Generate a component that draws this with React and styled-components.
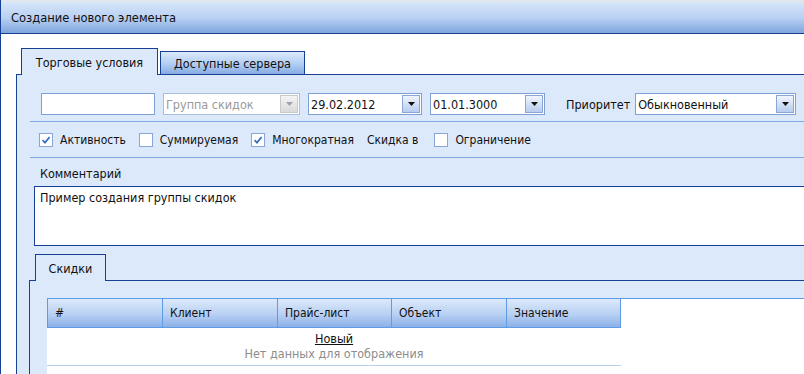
import React from 'react'
import styled, { createGlobalStyle } from 'styled-components'

const dark = '#173f94'
const fill = '#dce9fb'
const field = '#7f9fd6'

const Global = createGlobalStyle`
  html, body { margin: 0; padding: 0; background: #fff; }
  body { font-family: Tahoma, "DejaVu Sans Condensed", "Liberation Sans", sans-serif; font-size: 12px; color: #111; }
`

const Checked = () => (
  <svg width="10" height="10" viewBox="0 0 10 10">
    <path d="M1.5 5.2 L4 7.6 L8.6 2" fill="none" stroke="#3b6fc6" strokeWidth="1.8" />
  </svg>
)

const Arrow = ({ disabled }) => (
  <svg width="7" height="4" viewBox="0 0 7 4">
    <path d="M0 0 H7 L3.5 4 Z" fill={disabled ? '#9aa3ad' : '#111'} />
  </svg>
)

const ComboBox = ({ width, value, disabled }) => (
  <Combo $width={width} $disabled={disabled}>
    <ComboText $disabled={disabled}>{value}</ComboText>
    <DropButton $disabled={disabled}><Arrow disabled={disabled} /></DropButton>
  </Combo>
)

const Check = ({ checked, label }) => (
  <CheckItem>
    <Box>{checked && <Checked />}</Box>
    <span>{label}</span>
  </CheckItem>
)

const columns = ['#', 'Клиент', 'Прайс-лист', 'Объект', 'Значение']

export default function App() {
  return (
    <Window>
      <Global />
      <TopStrip />
      <TitleBar>Создание нового элемента</TitleBar>
      <Body>
        <TabStrip>
          <Tab $active $width={137}>Торговые условия</Tab>
          <Tab $width={145}>Доступные сервера</Tab>
        </TabStrip>
        <Panel>
          <FieldRow>
            <TextInput $width={114} />
            <ComboBox width={137} value="Группа скидок" disabled />
            <ComboBox width={114} value="29.02.2012" />
            <ComboBox width={115} value="01.01.3000" />
            <Label>Приоритет</Label>
            <ComboBox width={161} value="Обыкновенный" />
          </FieldRow>
          <CheckRow>
            <Check checked label="Активность" />
            <Check label="Суммируемая" />
            <Check checked label="Многократная" />
            <Plain>Скидка в</Plain>
            <Check label="Ограничение" />
          </CheckRow>
          <CommentLabel>Комментарий</CommentLabel>
          <Comment>Пример создания группы скидок</Comment>
          <InnerTabs>
            <Tab $active $width={71}>Скидки</Tab>
          </InnerTabs>
          <InnerPanel>
            <Grid>
              <GridHead>
                {columns.map((c) => (
                  <HeadCell key={c}>{c}</HeadCell>
                ))}
              </GridHead>
              <EmptyRow>
                <NewLink>Новый</NewLink>
                <NoData>Нет данных для отображения</NoData>
              </EmptyRow>
            </Grid>
          </InnerPanel>
        </Panel>
      </Body>
    </Window>
  )
}

const Window = styled.div`
  width: 804px;
  height: 374px;
  overflow: hidden;
  border-left: 1px solid ${dark};
  box-sizing: border-box;
  display: flex;
  flex-direction: column;
`
const TopStrip = styled.div`
  height: 2px;
  background: #e3e7ec;
`
const TitleBar = styled.div`
  height: 31px;
  display: flex;
  align-items: center;
  padding-left: 10px;
  background: linear-gradient(#d6e6fb, #b9d1f3 50%, #7fa6de);
  border-bottom: 1px solid ${dark};
  font-size: 12.8px;
`
const Body = styled.div`
  flex: 1;
  padding: 14px 0 0 15px;
  display: flex;
  flex-direction: column;
  min-height: 0;
`
const TabStrip = styled.div`
  display: flex;
  align-items: flex-end;
  gap: 2px;
  padding-left: 5px;
  position: relative;
  z-index: 1;
  margin-bottom: -1px;
`
const Tab = styled.div`
  width: ${(p) => p.$width}px;
  height: ${(p) => (p.$active ? 27 : 24)}px;
  box-sizing: border-box;
  border: 1px solid ${dark};
  border-bottom: ${(p) => (p.$active ? 'none' : `1px solid ${dark}`)};
  background: ${(p) => (p.$active ? fill : 'linear-gradient(#dce9fb, #b2cdf2 55%, #86abe3)')};
  display: flex;
  align-items: center;
  justify-content: center;
  padding-top: ${(p) => (p.$active ? 1 : 0)}px;
  font-size: 12.5px;
`
const Panel = styled.div`
  flex: 1;
  border-left: 1px solid ${dark};
  border-top: 1px solid ${dark};
  background: ${fill};
  padding: 18px 0 0 12px;
  display: flex;
  flex-direction: column;
`
const FieldRow = styled.div`
  margin-left: 1px;
  display: flex;
  align-items: center;
  gap: 8px;
  padding: 0 0 6px 11px;
  border-bottom: 1px solid #7eaae4;
`
const TextInput = styled.div`
  width: ${(p) => p.$width}px;
  height: 22px;
  box-sizing: border-box;
  border: 1px solid ${field};
  background: #fff;
`
const Combo = styled.div`
  width: ${(p) => p.$width}px;
  height: 22px;
  box-sizing: border-box;
  border: 1px solid ${(p) => (p.$disabled ? '#a9bfe2' : field)};
  background: #fff;
  display: flex;
  align-items: center;
  padding: 1px;
`
const ComboText = styled.div`
  flex: 1;
  padding-left: 1px;
  font-size: 12.5px;
  color: ${(p) => (p.$disabled ? '#9a9a9a' : '#111')};
`
const DropButton = styled.div`
  width: 18px;
  height: 18px;
  box-sizing: border-box;
  border: 1px solid ${(p) => (p.$disabled ? '#c9c9c9' : '#8aa6d6')};
  background: ${(p) => (p.$disabled ? 'linear-gradient(#f4f4f4, #d9d9d9)' : 'linear-gradient(#f0f5fd, #b7cdef)')};
  display: flex;
  align-items: center;
  justify-content: center;
`
const Label = styled.div`
  margin-left: 13px;
  margin-right: -3px;
  font-size: 12.5px;
`
const CheckRow = styled.div`
  margin-left: 1px;
  height: 35px;
  display: flex;
  align-items: center;
  gap: 13px;
  padding-left: 9px;
  border-bottom: 1px solid #7eaae4;
  font-size: 12px;
`
const CheckItem = styled.div`
  display: flex;
  align-items: center;
  gap: 7px;
`
const Box = styled.div`
  width: 14px;
  height: 14px;
  box-sizing: border-box;
  border: 1px solid #8aa6d6;
  background: #fff;
  display: flex;
  align-items: center;
  justify-content: center;
`
const Plain = styled.span`
  margin-right: 3px;
`
const CommentLabel = styled.div`
  margin: 8px 0 0 11px;
  height: 20px;
  font-size: 12.5px;
`
const Comment = styled.div`
  margin: 0 0 0 5px;
  height: 60px;
  box-sizing: border-box;
  border: 1px solid ${dark};
  border-right: none;
  background: #fff;
  padding: 3px 5px;
  font-size: 12.5px;
`
const InnerTabs = styled.div`
  display: flex;
  padding: 8px 0 0 6px;
  position: relative;
  z-index: 1;
  margin-bottom: -1px;
`
const InnerPanel = styled.div`
  flex: 1;
  border-left: 1px solid ${dark};
  border-top: 1px solid ${dark};
  padding: 17px 0 0 17px;
`
const Grid = styled.div`
  height: 100%;
  background: #fff;
  border-top: 1px solid #5d9be4;
`
const GridHead = styled.div`
  display: grid;
  grid-template-columns: 114px 115px 114px 115px 115px;
  width: 574px;
  box-sizing: border-box;
  border: 1px solid #5d9be4;
  border-top: none;
  background: linear-gradient(#dce9fa, #b8d0f3 55%, #8cb1e8);
`
const HeadCell = styled.div`
  height: 28px;
  display: flex;
  align-items: center;
  padding-left: 7px;
  border-left: 1px solid #5d9be4;
  font-size: 12px;
  &:first-child { border-left: none; }
`
const EmptyRow = styled.div`
  width: 574px;
  height: 38px;
  box-sizing: border-box;
  border-bottom: 1px solid #b9d0f0;
  display: flex;
  flex-direction: column;
  align-items: center;
  padding-top: 3px;
  font-size: 12.5px;
`
const NewLink = styled.span`
  text-decoration: underline;
  line-height: 15px;
`
const NoData = styled.span`
  color: #8d8d8d;
  line-height: 15px;
`
